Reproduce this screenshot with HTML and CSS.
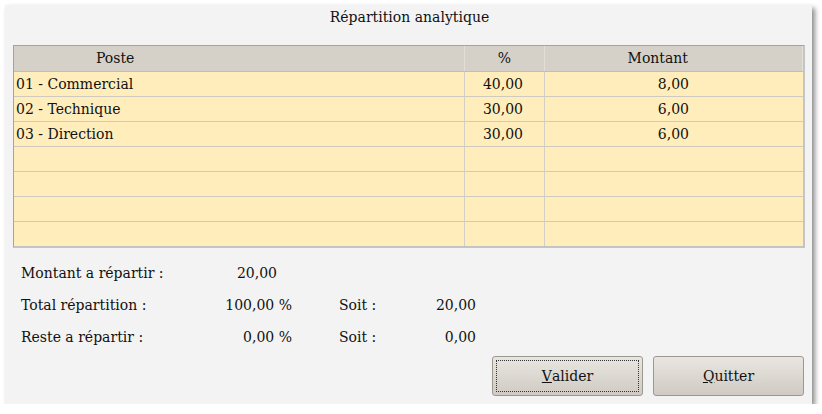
FILE: index.html
```html
<!DOCTYPE html>
<html lang="fr">
<head>
<meta charset="utf-8">
<title>Répartition analytique</title>
<link rel="stylesheet" href="styles.css">
</head>
<body>
<div class="window">
  <div class="title">Répartition analytique</div>
  <div class="grid">
    <div class="row head">
      <div class="c1 h-poste">Poste</div>
      <div class="c2 h-pct">%</div>
      <div class="c3 h-mnt">Montant</div>
    </div>
    <div class="row">
      <div class="c1">01 - Commercial</div>
      <div class="c2 num">40,00</div>
      <div class="c3 num">8,00</div>
    </div>
    <div class="row">
      <div class="c1">02 - Technique</div>
      <div class="c2 num">30,00</div>
      <div class="c3 num">6,00</div>
    </div>
    <div class="row">
      <div class="c1">03 - Direction</div>
      <div class="c2 num">30,00</div>
      <div class="c3 num">6,00</div>
    </div>
    <div class="row"><div class="c1"></div><div class="c2"></div><div class="c3"></div></div>
    <div class="row"><div class="c1"></div><div class="c2"></div><div class="c3"></div></div>
    <div class="row"><div class="c1"></div><div class="c2"></div><div class="c3"></div></div>
    <div class="row last"><div class="c1"></div><div class="c2"></div><div class="c3"></div></div>
  </div>
  <div class="summary">
    <div class="lbl">Montant a répartir :</div><div class="val nopct">20,00</div><div></div><div></div>
    <div class="lbl">Total répartition :</div><div class="val">100,00 %</div><div class="soit">Soit :</div><div class="val2">20,00</div>
    <div class="lbl">Reste a répartir :</div><div class="val">0,00 %</div><div class="soit">Soit :</div><div class="val2">0,00</div>
  </div>
  <div class="buttons">
    <button class="btn focus"><span class="inner"><u>V</u>alider</span></button>
    <button class="btn"><span class="inner"><u>Q</u>uitter</span></button>
  </div>
</div>
</body>
</html>
```
FILE: styles.css
```css
html, body {
  margin: 0;
  padding: 0;
  background: #ffffff;
}
body {
  font-family: "DejaVu Serif", serif;
  font-size: 14px;
  color: #111111;
}
.window {
  margin: 5px 0 0 5px;
  width: 807px;
  height: 399px;
  background: #f3f3f3;
  box-shadow: 3px 3px 5px rgba(0, 0, 0, 0.45);
  display: flex;
  flex-direction: column;
}
.title {
  height: 40px;
  line-height: 24px;
  text-align: center;
  padding-left: 2px;
}
.grid {
  margin-left: 8px;
  width: 789px;
  border-left: 1px solid #a3a3a3;
  border-top: 1px solid #a3a3a3;
  border-right: 2px solid #c4c4c4;
  border-bottom: 2px solid #c4c4c4;
  background: #ffedbc;
}
.row {
  display: grid;
  grid-template-columns: 451px 80px 1fr;
  height: 25px;
  border-bottom: 1px solid #cfcac0;
  box-sizing: border-box;
}
.row.last {
  border-bottom: none;
  height: 24px;
}
.row > div {
  line-height: 24px;
  border-right: 1px solid #d3cfc4;
  white-space: nowrap;
}
.row > div.c3 {
  border-right: none;
}
.row.head {
  height: 26px;
  background: #d5d1c9;
  border-bottom: 1px solid #c2beb6;
}
.row.head > div {
  line-height: 25px;
  border-right: 1px solid #e2dfd9;
}
.c1 {
  padding-left: 2px;
}
.num {
  text-align: right;
}
.c2.num {
  padding-right: 21px;
}
.c3.num {
  padding-right: 114px;
}
.h-poste {
  padding-left: 82px;
}
.h-pct {
  text-align: center;
}
.h-mnt {
  text-align: right;
  padding-right: 114px;
}
.summary {
  display: grid;
  grid-template-columns: 140px 131px 90px 94px;
  grid-auto-rows: 32px;
  margin: 9px 0 0 16px;
  align-items: center;
  white-space: nowrap;
}
.val, .val2 {
  text-align: right;
}
.val.nopct {
  padding-right: 15px;
}
.soit {
  padding-left: 47px;
}
.buttons {
  display: flex;
  justify-content: flex-end;
  gap: 10px;
  padding-right: 8px;
  margin-top: 3px;
}
.btn {
  width: 151px;
  height: 40px;
  font-family: inherit;
  font-size: 14px;
  color: #111111;
  border: 1px solid #9c9890;
  border-radius: 3px;
  background: linear-gradient(#e9e6e1, #cfcbc3);
  padding: 3px;
  display: flex;
}
.btn .inner {
  flex: 1;
  display: flex;
  align-items: center;
  justify-content: center;
  border: 1px dotted transparent;
}
.btn.focus .inner {
  border-color: #333333;
}
```
